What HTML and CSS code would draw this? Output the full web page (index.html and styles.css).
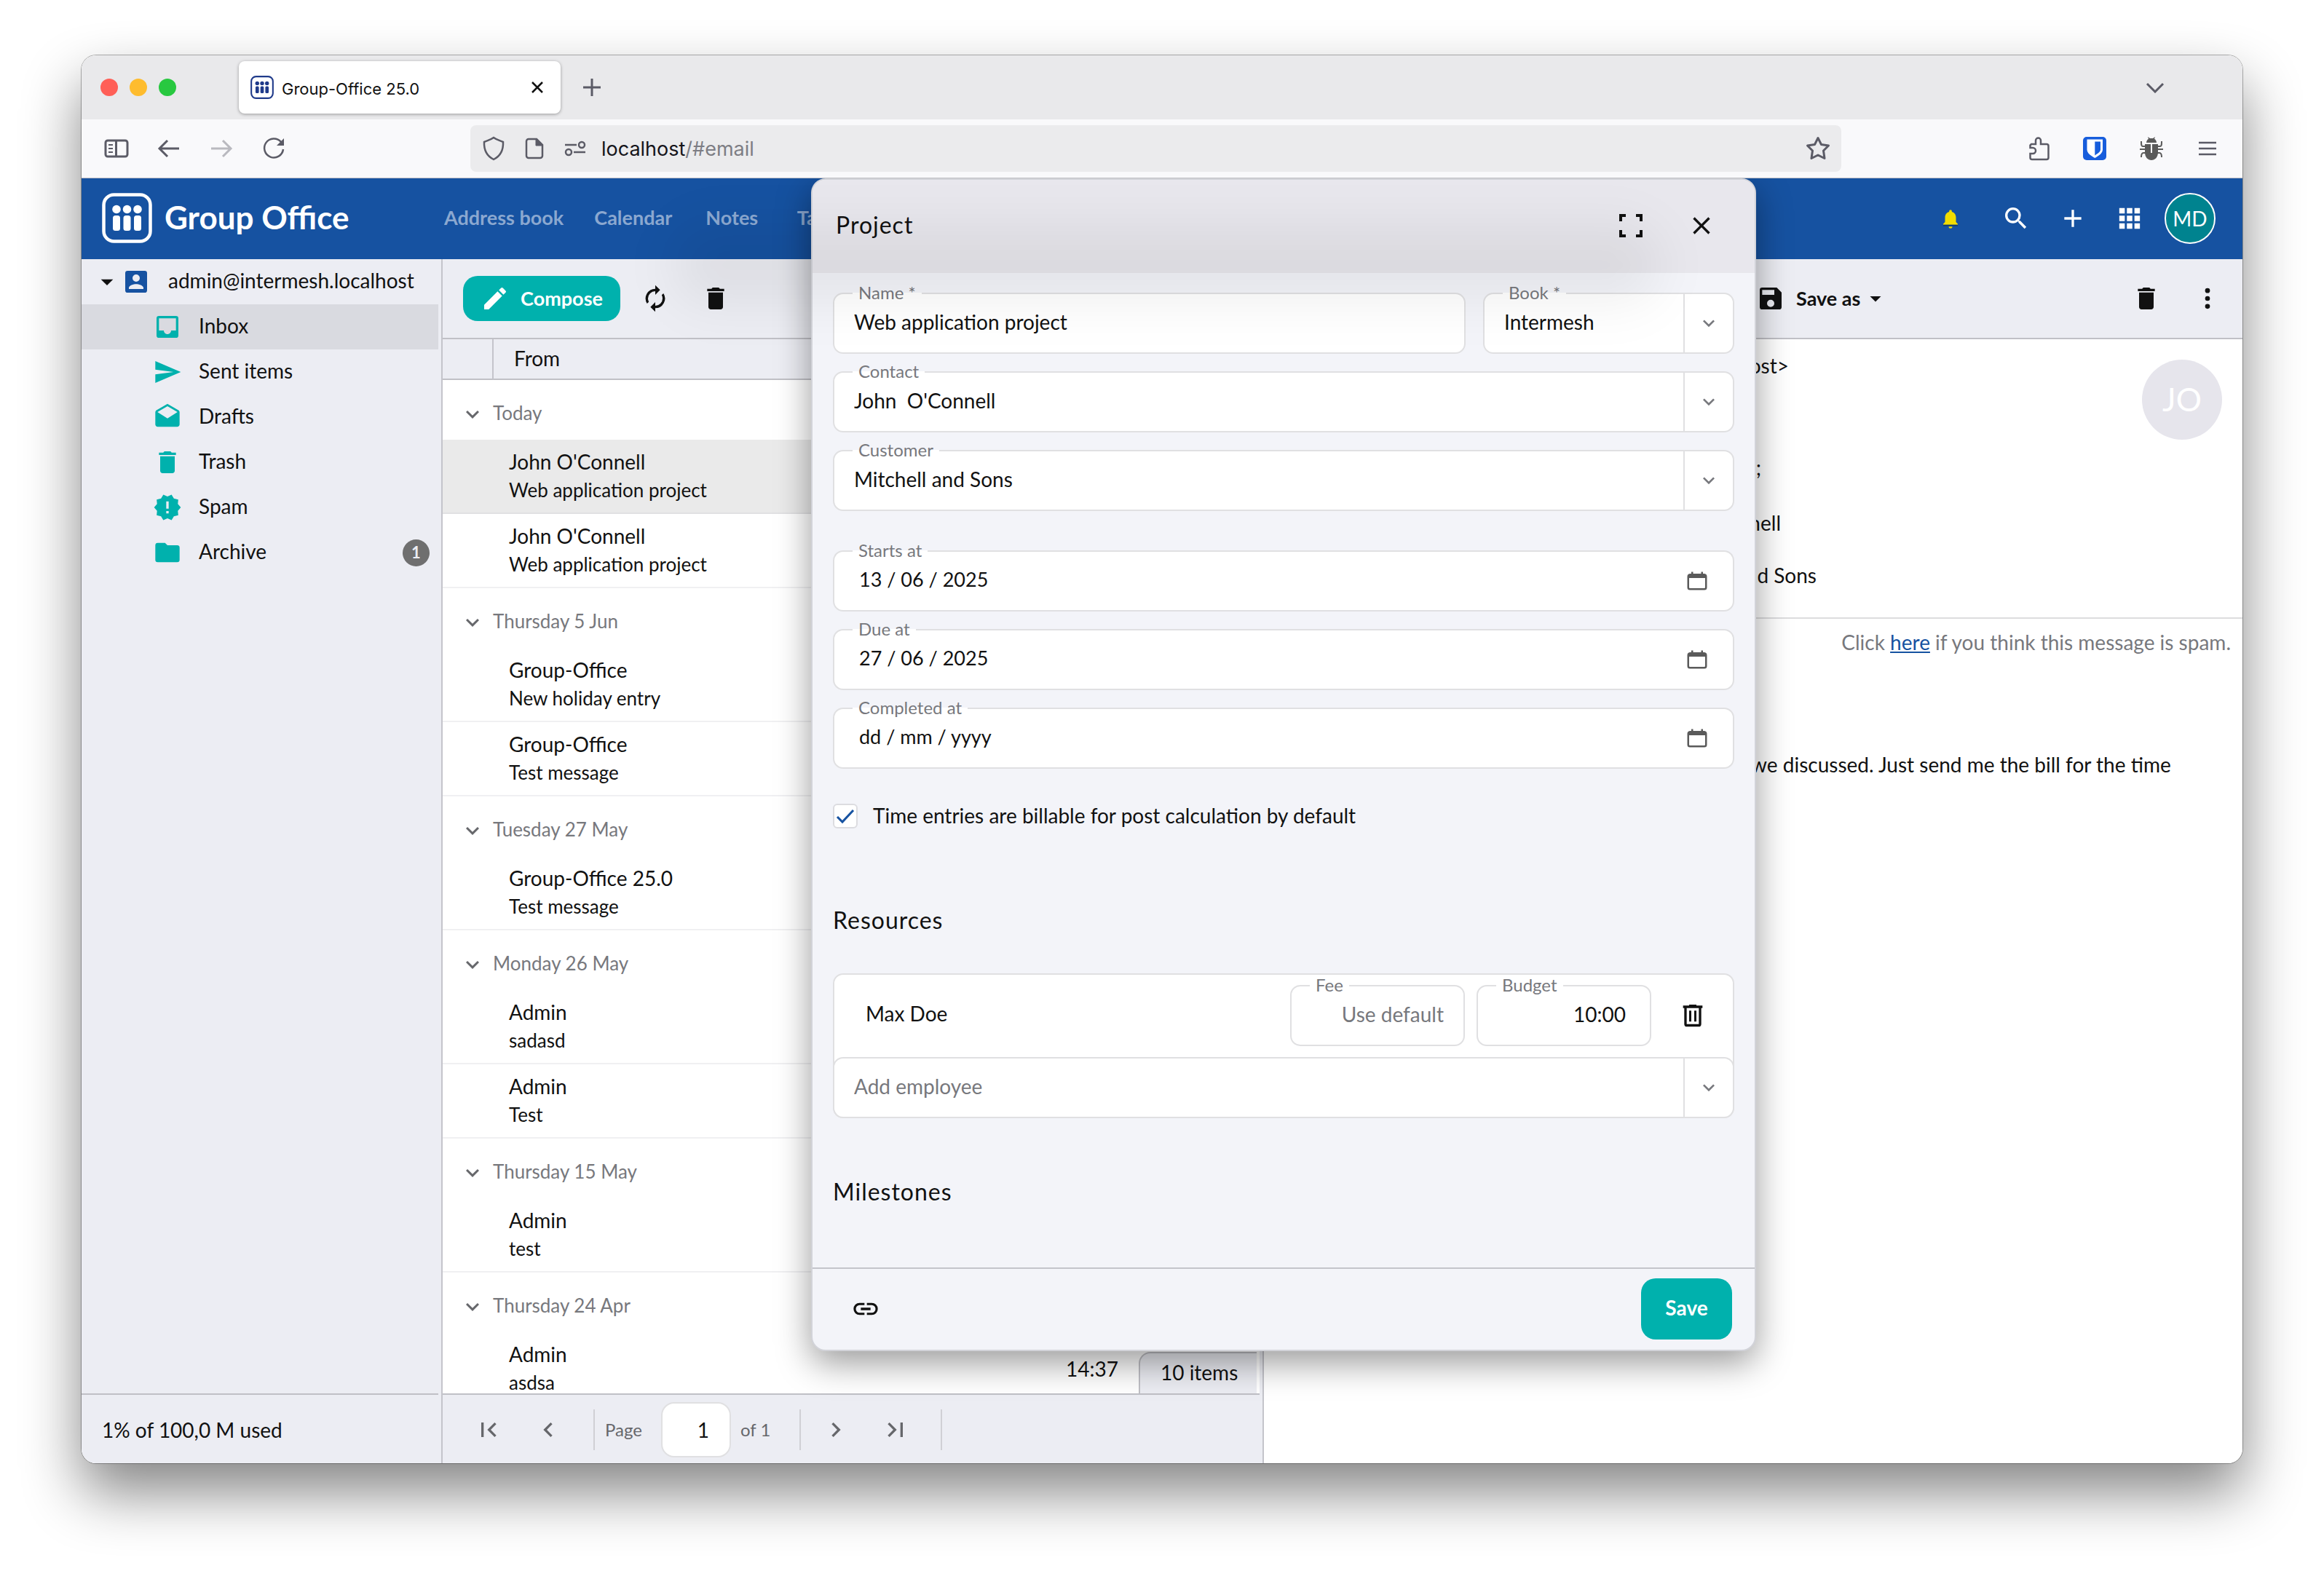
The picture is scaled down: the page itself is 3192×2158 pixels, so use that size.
FILE: index.html
```html
<!DOCTYPE html>
<html lang="en">
<head>
<meta charset="utf-8">
<title>Group-Office 25.0</title>
<link rel="stylesheet" href="styles.css">
</head>
<body>
<svg class="sprite" aria-hidden="true">
  <symbol id="i-down" viewBox="0 0 24 24"><path d="M7.41 8.59 12 13.17l4.59-4.58L18 10l-6 6-6-6z"/></symbol>
  <symbol id="i-caret" viewBox="0 0 24 24"><path d="m7 10 5 5 5-5z"/></symbol>
  <symbol id="i-trash" viewBox="0 0 24 24"><path d="M6 19c0 1.100.9 2 2 2h8c1.100 0 2-.9 2-2V7H6zM19 4h-3.500l-1-1h-5l-1 1H5v2h14z"/></symbol>
  <symbol id="i-logo" viewBox="0 0 69 69"><rect x="2.500" y="2.500" width="64" height="64" rx="14" fill="none" stroke="currentColor" stroke-width="4.500"/><circle cx="20" cy="22.500" r="5.800"/><circle cx="34.500" cy="22.500" r="5.800"/><circle cx="49" cy="22.500" r="5.800"/><rect x="15" y="31" width="10" height="21" rx="3.500"/><rect x="29.500" y="31" width="10" height="21" rx="3.500"/><rect x="44" y="31" width="10" height="21" rx="3.500"/></symbol>
  <symbol id="i-calendar" viewBox="0 0 28 28"><path d="M6 1.500h2.500V4h11V1.500H22V4h2a4 4 0 0 1 3.500 4v15a3.500 3.500 0 0 1-3.500 3.500H4A3.500 3.500 0 0 1 .5 23V8A4 4 0 0 1 4 4h2zM3 10v12.500c0 1 .5 1.500 1.500 1.500h19c1 0 1.500-.5 1.500-1.500V10z"/></symbol>
</svg>

<div class="window">
  <header class="tabs">
    <div class="lights"><i class="light light-red"></i><i class="light light-yellow"></i><i class="light light-green"></i></div>
    <div class="tab">
      <svg class="favicon"><use href="#i-logo"/></svg>
      <span class="tab-title">Group-Office 25.0</span>
      <button class="plain" aria-label="Close tab"><svg class="line" width="20" height="20" viewBox="0 0 20 20"><path d="m3 3 14 14M17 3 3 17" stroke-width="2.500"/></svg></button>
    </div>
    <button class="plain" aria-label="New tab"><svg class="line grey" width="26" height="26" viewBox="0 0 26 26"><path d="M13 1v24M1 13h24"/></svg></button>
    <button class="plain all-tabs" aria-label="List all tabs"><svg class="line grey" width="26" height="16" viewBox="0 0 26 16"><path d="m2 3 11 11L24 3"/></svg></button>
  </header>

  <nav class="browser-bar">
    <div class="history">
      <button class="plain" aria-label="Sidebar"><svg class="line grey" width="34" height="34" viewBox="0 0 34 34"><rect x="2" y="6" width="30" height="22" rx="3"/><path d="M16.500 6v22"/><path d="M6 12h6M6 17h6M6 22h6" stroke-width="2"/></svg></button>
      <button class="plain" aria-label="Back"><svg class="line grey" width="34" height="34" viewBox="0 0 34 34"><path d="M31 17H4M15 6 4 17l11 11"/></svg></button>
      <button class="plain faded" aria-label="Forward"><svg class="line grey" width="34" height="34" viewBox="0 0 34 34"><path d="M3 17h27M19 6l11 11-11 11"/></svg></button>
      <button class="plain" aria-label="Reload"><svg class="line grey" width="34" height="34" viewBox="0 0 34 34"><path d="M27 8A13 13 0 1 0 30 18" stroke-width="2.500"/><path d="M31 3v10H21z" fill="currentColor" stroke="none"/></svg></button>
    </div>
    <div class="address">
      <svg class="line grey" width="32" height="34" viewBox="0 0 32 34"><path d="M16 2c4 3 8 4 13 6C29.500 19 26 27 16 32 6 27 2.500 19 3 8c5-2 9-3 13-6z" stroke-width="2.500"/></svg>
      <svg class="line grey" width="32" height="34" viewBox="0 0 32 34"><path d="M8 4h11l8 8v15a3 3 0 0 1-3 3H8a3 3 0 0 1-3-3V7a3 3 0 0 1 3-3z" stroke-width="2.500"/><path d="M18 4v9h9z" fill="currentColor" stroke-width="1"/></svg>
      <svg class="line grey" width="32" height="34" viewBox="0 0 32 34"><path d="M2 12h16M14 22h16" stroke-width="2.500"/><circle cx="25" cy="12" r="4" stroke-width="2.500"/><circle cx="7" cy="22" r="4" stroke-width="2.500"/></svg>
      <span class="url">localhost<span class="url-path">/#email</span></span>
      <svg class="line grey" width="34" height="34" viewBox="0 0 34 34"><path d="m17 2.500 4.500 9 10 1.500-7 7 1.500 10.500-9-4.500-9 4.500 1.500-10.500-7-7 10-1.500z" stroke-linejoin="round"/></svg>
    </div>
    <div class="extensions">
      <button class="plain" aria-label="Extensions"><svg class="line grey" width="34" height="34" viewBox="0 0 34 34"><path d="M7 11h6V6a3.500 3.500 0 0 1 7 0v5h8a2.500 2.500 0 0 1 2.500 2.500v16A2.500 2.500 0 0 1 28 32H8a2.500 2.500 0 0 1-2.500-2.500V24H9a4 4 0 0 0 0-8H5.500v-3.500z" stroke-width="2.500"/></svg></button>
      <button class="plain" aria-label="Bitwarden"><svg width="34" height="34" viewBox="0 0 34 34"><rect x="1" y="1" width="32" height="32" rx="5" fill="#175ddc"/><path d="M6.500 4.500h21.500v14c0 5-6 9-10.700 11.500C12.500 27.500 6.500 23.500 6.500 18.500z" fill="#fff"/><path d="M17.300 7.500H25v11c0 3-4 5.500-7.700 8z" fill="#175ddc"/></svg></button>
      <button class="plain" aria-label="Debugger"><svg class="bug" width="34" height="34" viewBox="0 0 34 34"><path d="M10 9c0-3 2-5 3-5l-1-3 3 2h4l3-2-1 3c1 0 3 2 3 5z" fill="currentColor"/><path d="M8 11h8v12h2V11h8v11c0 7-4 11-9 11s-9-4-9-11z" fill="currentColor"/><path d="M8 14H5c-2 0-2-2-2-7M26 14h3c2 0 2-2 2-7M9 18H1M25 18h8M9 23H6c-3 0-3 3-3 6M25 23h3c3 0 3 3 3 6" fill="none" stroke="currentColor" stroke-width="2"/></svg></button>
      <button class="plain" aria-label="Menu"><svg class="line grey" width="34" height="34" viewBox="0 0 34 34"><path d="M5 9h24M5 17h24M5 25h24" stroke-width="2.500"/></svg></button>
    </div>
  </nav>

  <div class="app">
    <header class="app-bar">
      <a class="brand" href="#start"><svg class="brand-logo"><use href="#i-logo"/></svg><span>Group Office</span></a>
      <nav class="modules"><a href="#addressbook">Address book</a><a href="#calendar">Calendar</a><a href="#notes">Notes</a><a href="#tasks">Tasks</a></nav>
      <div class="app-actions">
        <button class="plain bell" aria-label="Notifications"><svg width="28" height="40" viewBox="2 -4 20 32"><path d="M12 2.500A1.500 1.500 0 0 0 10.500 4v.7C7.600 5.400 6 8 6 11v5l-2 2v1h16v-1l-2-2v-5c0-3-1.600-5.600-4.500-6.300V4A1.500 1.500 0 0 0 12 2.500z"/><path d="M4 19h16v1.500H4z" fill="#123a6b"/><path d="M10 21h4a2 2 0 0 1-4 0z"/></svg></button>
        <button class="plain" aria-label="Search"><svg class="icon search" viewBox="0 0 24 24"><path d="M15.500 14h-.79l-.28-.27A6.470 6.470 0 0 0 16 9.500 6.500 6.500 0 1 0 9.500 16c1.610 0 3.090-.59 4.230-1.570l.27.28v.79l5 4.990L20.490 19zm-6 0a4.500 4.500 0 1 1 0-9 4.500 4.500 0 0 1 0 9z"/></svg></button>
        <button class="plain" aria-label="Add"><svg class="icon" viewBox="0 0 24 24"><path d="M19 13h-6v6h-2v-6H5v-2h6V5h2v6h6z"/></svg></button>
        <button class="plain" aria-label="Modules"><svg class="icon" viewBox="0 0 24 24"><path d="M3.500 3.500h4.500V8H3.500zm6.250 0h4.500V8h-4.500zm6.250 0h4.500V8H16zM3.500 9.750h4.500v4.500H3.500zm6.250 0h4.500v4.500h-4.500zm6.250 0h4.500v4.500H16zM3.500 16h4.500v4.500H3.500zm6.250 0h4.500v4.500h-4.500zM16 16h4.500v4.500H16z"/></svg></button>
        <button class="plain user" aria-label="Account">MD</button>
      </div>
    </header>

    <div class="panes">
      <aside class="folders">
        <ul class="tree">
          <li class="account"><svg class="icon" viewBox="0 0 24 24"><use href="#i-caret"/></svg><svg class="icon blue" viewBox="0 0 24 24"><path d="M3 5v14a2 2 0 0 0 2 2h14a2 2 0 0 0 2-2V5a2 2 0 0 0-2-2H5a2 2 0 0 0-2 2zm12 4a3 3 0 1 1-6 0 3 3 0 0 1 6 0zm-9 8c0-2 4-3.100 6-3.100s6 1.100 6 3.100v1H6z"/></svg><span>admin@intermesh.localhost</span></li>
          <li class="folder selected"><svg class="icon" viewBox="0 0 24 24"><path d="M19 3H5a2 2 0 0 0-2 2v14a2 2 0 0 0 2 2h14a2 2 0 0 0 2-2V5a2 2 0 0 0-2-2zm0 12h-4c0 1.660-1.350 3-3 3s-3-1.340-3-3H5V5h14z"/></svg><span>Inbox</span></li>
          <li class="folder"><svg class="icon" viewBox="0 0 24 24"><path d="M2 21 23 12 2 3v7l15 2-15 2z"/></svg><span>Sent items</span></li>
          <li class="folder"><svg class="icon" viewBox="0 0 24 24"><path d="M21.990 8c0-.72-.37-1.350-.94-1.700L12 1 2.950 6.300C2.380 6.650 2 7.280 2 8v10c0 1.100.9 2 2 2h16c1.100 0 2-.9 2-2zM12 13 3.740 7.840 12 3l8.260 4.840z"/></svg><span>Drafts</span></li>
          <li class="folder"><svg class="icon"><use href="#i-trash"/></svg><span>Trash</span></li>
          <li class="folder"><svg class="icon" viewBox="0 0 24 24"><path d="m23 12-2.440-2.780.34-3.680-3.610-.82-1.890-3.180L12 3 8.600 1.540 6.710 4.720l-3.610.81.34 3.680L1 12l2.440 2.780-.34 3.690 3.610.82 1.890 3.180L12 21l3.400 1.460 1.890-3.180 3.610-.82-.34-3.680zm-10 5h-2v-2h2zm0-4h-2V7h2z"/></svg><span>Spam</span></li>
          <li class="folder"><svg class="icon" viewBox="0 0 24 24"><path d="M10 4H4a2 2 0 0 0-2 2v12a2 2 0 0 0 2 2h16a2 2 0 0 0 2-2V8a2 2 0 0 0-2-2h-8z"/></svg><span>Archive</span><b class="count">1</b></li>
        </ul>
        <footer class="quota">1% of 100,0 M used</footer>
      </aside>
      <div class="splitter"></div>

      <section class="messages">
        <div class="toolbar">
          <button class="primary compose"><svg class="icon" viewBox="0 0 24 24"><path d="M3 17.250V21h3.750L17.810 9.940l-3.750-3.750zM20.710 7.040a1 1 0 0 0 0-1.410l-2.340-2.340a1 1 0 0 0-1.410 0l-1.830 1.830 3.750 3.750z"/></svg>Compose</button>
          <button class="plain" aria-label="Refresh"><svg class="icon" viewBox="0 0 24 24"><path d="M12 6v3l4-4-4-4v3a8 8 0 0 0-6.760 12.240L6.700 14.800A5.870 5.870 0 0 1 6 12a6 6 0 0 1 6-6zm6.760 1.740L17.300 9.200c.44.840.7 1.790.7 2.800a6 6 0 0 1-6 6v-3l-4 4 4 4v-3a8 8 0 0 0 6.760-12.260z"/></svg></button>
          <button class="plain" aria-label="Delete"><svg class="icon"><use href="#i-trash"/></svg></button>
        </div>
        <div class="list">
          <table>
            <thead><tr><th class="mark"></th><th class="from">From</th><th></th></tr></thead>
            <tbody>
              <tr class="group"><td colspan="3"><div><svg><use href="#i-down"/></svg>Today</div></td></tr>
              <tr class="message selected"><td></td><td><p>John O'Connell</p><p class="subject">Web application project</p></td><td></td></tr>
              <tr class="message"><td></td><td><p>John O'Connell</p><p class="subject">Web application project</p></td><td></td></tr>
              <tr class="group"><td colspan="3"><div><svg><use href="#i-down"/></svg>Thursday 5 Jun</div></td></tr>
              <tr class="message"><td></td><td><p>Group-Office</p><p class="subject">New holiday entry</p></td><td></td></tr>
              <tr class="message"><td></td><td><p>Group-Office</p><p class="subject">Test message</p></td><td></td></tr>
              <tr class="group"><td colspan="3"><div><svg><use href="#i-down"/></svg>Tuesday 27 May</div></td></tr>
              <tr class="message"><td></td><td><p>Group-Office 25.0</p><p class="subject">Test message</p></td><td></td></tr>
              <tr class="group"><td colspan="3"><div><svg><use href="#i-down"/></svg>Monday 26 May</div></td></tr>
              <tr class="message"><td></td><td><p>Admin</p><p class="subject">sadasd</p></td><td></td></tr>
              <tr class="message"><td></td><td><p>Admin</p><p class="subject">Test</p></td><td></td></tr>
              <tr class="group"><td colspan="3"><div><svg><use href="#i-down"/></svg>Thursday 15 May</div></td></tr>
              <tr class="message"><td></td><td><p>Admin</p><p class="subject">test</p></td><td></td></tr>
              <tr class="group"><td colspan="3"><div><svg><use href="#i-down"/></svg>Thursday 24 Apr</div></td></tr>
              <tr class="message"><td></td><td><p>Admin</p><p class="subject">asdsa</p></td><td class="time">14:37</td></tr>
            </tbody>
          </table>
          <div class="total">10 items</div>
        </div>
        <footer class="pager">
          <button class="plain" aria-label="First page"><svg class="icon" viewBox="0 0 24 24"><path d="M18.410 16.590 13.820 12l4.590-4.590L17 6l-6 6 6 6zM6 6h2v12H6z"/></svg></button>
          <button class="plain" aria-label="Previous page"><svg class="icon" viewBox="0 0 24 24"><path d="M15.410 7.410 14 6l-6 6 6 6 1.410-1.410L10.830 12z"/></svg></button>
          <label class="page-label" for="page">Page</label>
          <input class="page" id="page" type="text" value="1">
          <span class="page-total">of 1</span>
          <button class="plain" aria-label="Next page"><svg class="icon" viewBox="0 0 24 24"><path d="M10 6 8.590 7.410 13.170 12l-4.580 4.590L10 18l6-6z"/></svg></button>
          <button class="plain" aria-label="Last page"><svg class="icon" viewBox="0 0 24 24"><path d="M5.590 7.410 10.180 12l-4.590 4.590L7 18l6-6-6-6zM16 6h2v12h-2z"/></svg></button>
          <i class="pager-end"></i>
        </footer>
      </section>
      <div class="splitter"></div>

      <article class="reader">
        <div class="toolbar reader-bar">
          <button class="plain save-as"><svg class="icon" viewBox="0 0 24 24"><path d="M17 3H5a2 2 0 0 0-2 2v14a2 2 0 0 0 2 2h14a2 2 0 0 0 2-2V7zm-5 16a3 3 0 1 1 0-6 3 3 0 0 1 0 6zm3-10H5V5h10z"/></svg>Save as<svg class="small-caret"><use href="#i-caret"/></svg></button>
          <button class="plain reader-delete" aria-label="Delete"><svg class="icon"><use href="#i-trash"/></svg></button>
          <button class="plain" aria-label="More"><svg class="icon" viewBox="0 0 24 24"><circle cx="12" cy="5.500" r="2"/><circle cx="12" cy="12" r="2"/><circle cx="12" cy="18.500" r="2"/></svg></button>
        </div>
        <header class="mail-head">
          <div class="mail-lines">
            <p class="sender">localhost&gt;</p>
            <p class="recipients">;</p>
            <p class="linked">Connell</p>
            <p class="linked customer">and Sons</p>
          </div>
          <div class="avatar">JO</div>
        </header>
        <p class="spam">Click <a href="#spam">here</a> if you think this message is spam.</p>
        <p class="mail-body">we discussed. Just send me the bill for the time</p>
      </article>
    </div>

    <section class="dialog" role="dialog" aria-labelledby="dialog-title">
      <header class="dialog-head">
        <h2 id="dialog-title">Project</h2>
        <button class="plain" aria-label="Maximize"><svg width="32" height="32" viewBox="0 0 32 32"><path d="M0 0h9v4H4v6H0zM23 0h9v10h-4V4h-5zM0 22h4v6h5v4H0zM28 22h4v10h-9v-4h5z"/></svg></button>
        <button class="plain" aria-label="Close"><svg class="icon" viewBox="0 0 24 24"><path d="M19 6.410 17.590 5 12 10.590 6.410 5 5 6.410 10.590 12 5 17.590 6.410 19 12 13.410 17.590 19 19 17.590 13.410 12z"/></svg></button>
      </header>
      <form class="dialog-body">
        <div class="fields">
          <div class="name-row">
            <div class="field name"><label for="name">Name *</label><input id="name" type="text" value="Web application project"></div>
            <div class="field book"><label for="book">Book *</label><select id="book"><option>Intermesh</option></select><span class="trigger"><svg><use href="#i-down"/></svg></span></div>
          </div>
          <div class="field"><label for="contact">Contact</label><select id="contact"><option>John&nbsp;&nbsp;O'Connell</option></select><span class="trigger"><svg><use href="#i-down"/></svg></span></div>
          <div class="field"><label for="customer">Customer</label><select id="customer"><option>Mitchell and Sons</option></select><span class="trigger"><svg><use href="#i-down"/></svg></span></div>
        </div>
        <div class="fields">
          <div class="field date"><label for="start">Starts at</label><input id="start" type="text" value="13 / 06 / 2025"><button type="button" class="plain" aria-label="Pick start date"><svg><use href="#i-calendar"/></svg></button></div>
          <div class="field date"><label for="due">Due at</label><input id="due" type="text" value="27 / 06 / 2025"><button type="button" class="plain" aria-label="Pick due date"><svg><use href="#i-calendar"/></svg></button></div>
          <div class="field date"><label for="completed">Completed at</label><input id="completed" type="text" value="dd / mm / yyyy"><button type="button" class="plain" aria-label="Pick completion date"><svg><use href="#i-calendar"/></svg></button></div>
        </div>
        <div class="check">
          <span class="box"><input type="checkbox" id="billable" checked><svg width="30" height="30" viewBox="0 0 30 30"><path d="m4 16 7 7L26 7"/></svg></span>
          <label for="billable">Time entries are billable for post calculation by default</label>
        </div>
        <h3>Resources</h3>
        <div class="resources">
          <div class="resource">
            <span class="person">Max Doe</span>
            <div class="field amount"><label for="fee">Fee</label><input id="fee" type="text" placeholder="Use default"></div>
            <div class="field amount budget"><label for="budget">Budget</label><input id="budget" type="text" value="10:00"></div>
            <button type="button" class="plain" aria-label="Remove"><svg class="icon" viewBox="0 0 24 24"><path d="M15 3.500V3H9v.8H4v2h1V19a2.200 2.200 0 0 0 2.200 2.200h9.600A2.200 2.200 0 0 0 19 19V5.800h1v-2h-5zM7 5.800h10V19H7zM9 8h1.800v9H9zm4.200 0H15v9h-1.800z"/></svg></button>
          </div>
          <div class="field"><select class="empty" aria-label="Add employee"><option>Add employee</option></select><span class="trigger"><svg><use href="#i-down"/></svg></span></div>
        </div>
        <h3 class="milestones">Milestones</h3>
      </form>
      <footer class="dialog-foot">
        <button class="plain" aria-label="Link"><svg class="icon" viewBox="0 0 24 24"><path d="M3.900 12A3.100 3.100 0 0 1 7 8.900h4V7H7a5 5 0 0 0 0 10h4v-1.900H7A3.100 3.100 0 0 1 3.900 12zM8 13h8v-2H8zm9-6h-4v1.900h4a3.100 3.100 0 0 1 0 6.200h-4V17h4a5 5 0 0 0 0-10z"/></svg></button>
        <button class="primary save">Save</button>
      </footer>
    </section>
    <div class="haze"></div>
  </div>
</div>
</body>
</html>
```
FILE: styles.css
```css
* { box-sizing: border-box; }

body {
  margin: 0;
  padding: 76px 112px 148px;
  background: #fff;
  color: #111;
  font: 28px/36px Lato, "Liberation Sans", sans-serif;
}

p, h2, h3, ul { margin: 0; padding: 0; }
ul { list-style: none; }
svg { display: block; flex: none; fill: currentColor; }
.sprite { position: absolute; width: 0; height: 0; }
.icon { width: 40px; height: 40px; }
.line { fill: none; stroke: currentColor; stroke-width: 3; }
.grey { color: #5b5b66; }

button, input, select { font: inherit; color: inherit; }
.plain { display: flex; align-items: center; padding: 0; border: 0; background: none; }
.faded { opacity: .4; }

.primary {
  display: flex;
  align-items: center;
  justify-content: center;
  border: 0;
  border-radius: 20px;
  background: #00b1ad;
  color: #fff;
  font-weight: 700;
}

/* browser window */
.window {
  display: flex;
  flex-direction: column;
  height: calc(100vh - 224px);
  min-height: 1200px;
  overflow: hidden;
  border-radius: 20px;
  background: #fff;
}

body::before {
  content: "";
  position: absolute;
  z-index: -1;
  inset: 76px 112px 148px;
  border-radius: 20px;
  box-shadow: 0 0 0 1px rgba(0, 0, 0, .3), 0 40px 80px rgba(0, 0, 0, .48);
}

.tabs { display: flex; align-items: center; height: 88px; padding: 0 107px 0 26px; background: #e9e9eb; }
.lights { display: flex; gap: 16px; margin-right: 86px; }
.light { width: 24px; height: 24px; border-radius: 50%; }
.light-red { background: #ff5f57; }
.light-yellow { background: #febc2e; }
.light-green { background: #28c840; }

.tab {
  display: flex;
  align-items: center;
  width: 442px;
  height: 72px;
  margin-right: 30px;
  padding: 0 22px 0 16px;
  border-radius: 8px;
  background: #fff;
  box-shadow: 0 1px 4px rgba(0, 0, 0, .35);
}
.favicon { width: 32px; height: 32px; color: #1f3a8a; }
.tab-title { flex: 1; padding: 4px 0 0 11px; font: 22px/30px Inter, sans-serif; }
.all-tabs { margin-left: auto; }

.browser-bar {
  display: flex;
  align-items: center;
  height: 81px;
  padding: 0 31px;
  border-bottom: 1px solid #bfbfc4;
  background: #f9f9fb;
}
.history { display: flex; gap: 38px; width: 503px; }
.address {
  display: flex;
  flex: 1;
  align-items: center;
  gap: 24px;
  height: 64px;
  padding: 0 15px 0 16px;
  border-radius: 8px;
  background: #ebebed;
}
.url { flex: 1; padding-top: 2px; margin-left: -4px; font: 27px/36px Inter, sans-serif; color: #15141a; }
.url-path { color: #7d7d84; }
.extensions { display: flex; justify-content: space-between; width: 520px; padding-left: 254px; }
.bug { color: #5a5a5a; }

/* application header */
.app { position: relative; display: flex; flex: 1; flex-direction: column; min-height: 0; overflow: hidden; }
.app-bar { display: flex; align-items: center; height: 111px; padding: 0 37px 2px 28px; background: #1652a1; color: #fff; }
.brand { display: flex; align-items: center; gap: 17px; width: 470px; color: #fff; font-size: 44px; font-weight: 700; line-height: 56px; text-decoration: none; }
.brand span { padding-bottom: 4px; }
.brand-logo { width: 69px; height: 69px; }
.modules { display: flex; gap: 42px; width: 508px; padding-bottom: 2px; overflow: hidden; }
.modules a { flex: none; min-width: 80px; color: #8ba8d0; font-size: 27px; font-weight: 700; text-align: center; text-decoration: none; }
.app-actions { display: flex; align-items: center; gap: 38px; margin-left: auto; }
.bell { margin-right: 18px; color: #f2dd00; }
.user {
  justify-content: center;
  width: 70px;
  height: 70px;
  margin-left: -10px;
  border: 2px solid #fff;
  border-radius: 50%;
  background: #00838f;
  color: #fff;
}

.panes { display: flex; flex: 1; min-height: 0; }
.splitter { width: 6px; padding: 0; border-right: 2px solid #c4c4cb; background: #ecedf3; }

/* folder tree */
.folders { display: flex; flex-direction: column; width: 490px; background: #ecedf3; }
.tree { flex: 1; }
.tree li { display: flex; align-items: center; height: 62px; }
.account { padding-left: 15px; }
.account span { padding: 0 0 5px 24px; }
.blue { color: #1652a1; }
.folder { padding: 0 12px 0 98px; }
.folder .icon { color: #00b1ad; }
.folder span { flex: 1; padding: 0 0 4px 23px; }
.folder.selected { background: #d9dae0; }
.count { width: 37px; height: 37px; border-radius: 50%; background: #6f6f6f; color: #ecedf3; font-size: 22px; text-align: center; }
.quota { height: 96px; padding: 30px 28px; border-top: 2px solid #c0c0c6; }

/* message list */
.messages { display: flex; flex-direction: column; width: 1122px; }
.toolbar { display: flex; flex: none; align-items: center; height: 110px; border-bottom: 2px solid #c0c0c6; background: #ecedf3; }
.messages .toolbar { gap: 43px; padding-left: 28px; }
.toolbar button { font-size: 27px; }
.compose { gap: 15px; width: 216px; height: 62px; margin-right: -15px; padding: 0; }

.list { position: relative; flex: 1; min-height: 0; overflow: hidden; }
table { width: 100%; border-spacing: 0; table-layout: fixed; }
td, th { padding: 0; font-weight: 400; text-align: left; }
th { height: 56px; padding-bottom: 2px; border-bottom: 2px solid #c0c0c6; background: #ecedf3; }
.mark { width: 70px; border-right: 2px solid #c4c4cb; }
.from { padding-left: 28px; }
th:last-child { width: 300px; }
.group div { display: flex; align-items: center; gap: 10px; height: 82px; padding: 8px 0 0 23px; color: #77787d; font-size: 26px; }
.group svg { width: 36px; height: 36px; margin-top: 4px; color: #66676b; }
.message td { height: 102px; border-bottom: 2px solid #f0f0f2; line-height: 39px; }
.message td:nth-child(2) { padding-left: 21px; }
.message.selected td { border-color: #e1e1e3; background: #eaeaea; }
.subject { font-size: 26px; }
.message .time { padding-right: 194px; text-align: right; }
.total {
  position: absolute;
  right: 4px;
  bottom: 0;
  width: 162px;
  height: 57px;
  padding: 8px 0 0 28px;
  border: solid #c0c0c6;
  border-width: 2px 0 0 2px;
  border-radius: 16px 0 0;
  background: #ecedf3;
}

.pager { display: flex; align-items: center; height: 96px; padding: 2px 0 0 43px; border-top: 2px solid #c0c0c6; background: #ecedf3; color: #66676b; }
.pager button { margin-right: 42px; }
.page-label { padding: 10px 26px 10px 14px; border-left: 2px solid #d0d0d5; font-size: 24px; }
.page { width: 96px; height: 76px; padding: 0 28px; border: 2px solid #e0e0e2; border-radius: 18px; background: #fff; color: #111; text-align: right; }
.page-total { margin-right: 28px; padding: 10px 40px 10px 13px; border-right: 2px solid #d0d0d5; font-size: 24px; }
.pager-end { width: 2px; height: 56px; background: #d0d0d5; }

/* open message */
.reader { flex: 1; }
.reader-bar { gap: 44px; padding: 0 28px 0 676px; }
.save-as { gap: 15px; font-weight: 700; }
.save-as .small-caret { width: 36px; height: 36px; margin-left: -12px; }
.reader-delete { margin-left: auto; }
.mail-head { display: flex; justify-content: space-between; height: 384px; padding: 18px 28px 0; border-bottom: 2px solid #dcdcde; }
.mail-lines { width: 731px; text-align: right; }
.sender { padding: 0 38px 94px 0; }
.recipients { padding: 10px 76px 40px 0; }
.linked { padding: 0 49px 36px 0; }
.linked.customer { padding-right: 0; }
.avatar { width: 110px; height: 110px; margin-top: 10px; border-radius: 50%; background: #e6e5ec; color: #fff; font-size: 44px; line-height: 108px; text-align: center; }
.spam { padding: 14px 16px; color: #77787d; text-align: right; }
.spam a { color: #1652a1; }
.mail-body { padding: 118px 0 0 669px; }

/* project dialog */
.dialog {
  position: absolute;
  top: 0;
  left: 1002px;
  width: 1298px;
  border: 2px solid #d2d3d9;
  border-radius: 20px;
  background: #f3f4f9;
  box-shadow: 0 16px 48px rgba(0, 0, 0, .4);
  overflow: hidden;
}
.dialog-head { display: flex; align-items: center; gap: 61px; height: 128px; padding: 0 53px 2px 32px; background: #e8e7ed; }
h2, h3 { font-size: 32px; font-weight: 400; line-height: 40px; letter-spacing: 1px; }
h2 { flex: 1; padding-bottom: 2px; }
.dialog-body { padding: 27px 28px 84px; }
.fields { display: flex; flex-direction: column; gap: 24px; }
.fields + .fields { margin-top: 54px; }
.name-row { display: flex; gap: 24px; }

.field { position: relative; display: flex; align-items: stretch; height: 84px; border: 2px solid #e0e0e2; border-radius: 14px; background: #fff; }
.field label {
  position: absolute;
  top: -18px;
  left: 25px;
  padding: 0 8px;
  background: linear-gradient(#fff, #fff) 0 16px / 100% 3px no-repeat;
  color: #77787d;
  font-size: 24px;
  line-height: 32px;
}
.field input, .field select { flex: 1; min-width: 0; padding: 0 27px 4px; border: 0; border-radius: 14px; background: none; appearance: none; }
.field input::placeholder, .field .empty { color: #77787d; opacity: 1; }
.field.name { flex: 1; }
.field.book { width: 345px; }
.trigger { display: flex; align-items: center; width: 68px; padding-left: 17px; border-left: 2px solid #e0e0e2; color: #77787d; }
.trigger svg { width: 32px; height: 32px; }
.date input { padding-left: 34px; font-size: 27px; }
.date .plain { padding-right: 35px; color: #5a5a5a; }
.date svg { width: 28px; height: 28px; }

.check { display: flex; align-items: center; gap: 21px; margin: 48px 0 106px; height: 34px; }
.check label { padding-bottom: 2px; }
.box { position: relative; width: 34px; height: 34px; color: #1652a1; }
.box input { width: 34px; height: 34px; margin: 0; border: 2px solid #dcdce0; border-radius: 6px; background: #fff; appearance: none; }
.box svg { position: absolute; top: 2px; left: 2px; fill: none; stroke: currentColor; stroke-width: 3; }

.resources { margin: 53px 0 81px; border: 2px solid #e0e0e2; border-radius: 14px; background: #fff; }
.resource { display: flex; gap: 16px; height: 113px; padding: 14px 35px 0 43px; }
.person { flex: 1; padding: 21px 0; }
.amount { width: 240px; }
.amount input { text-align: right; }
.budget input { padding-right: 33px; }
.resource .plain { height: 84px; padding-left: 21px; }
.resources > .field { margin: 0 -2px -2px; }

.dialog-foot { display: flex; align-items: center; justify-content: space-between; height: 113px; padding: 0 31px 2px 53px; border-top: 2px solid #c4c5cb; }
.save { width: 125px; height: 84px; padding: 0 0 3px; }

.haze { position: absolute; top: 104px; left: 850px; width: 1280px; height: 30px; border-radius: 40px; background: rgba(0, 0, 0, .06); box-shadow: 0 0 60px 40px rgba(0, 0, 0, .06); filter: blur(20px); pointer-events: none; }
```
